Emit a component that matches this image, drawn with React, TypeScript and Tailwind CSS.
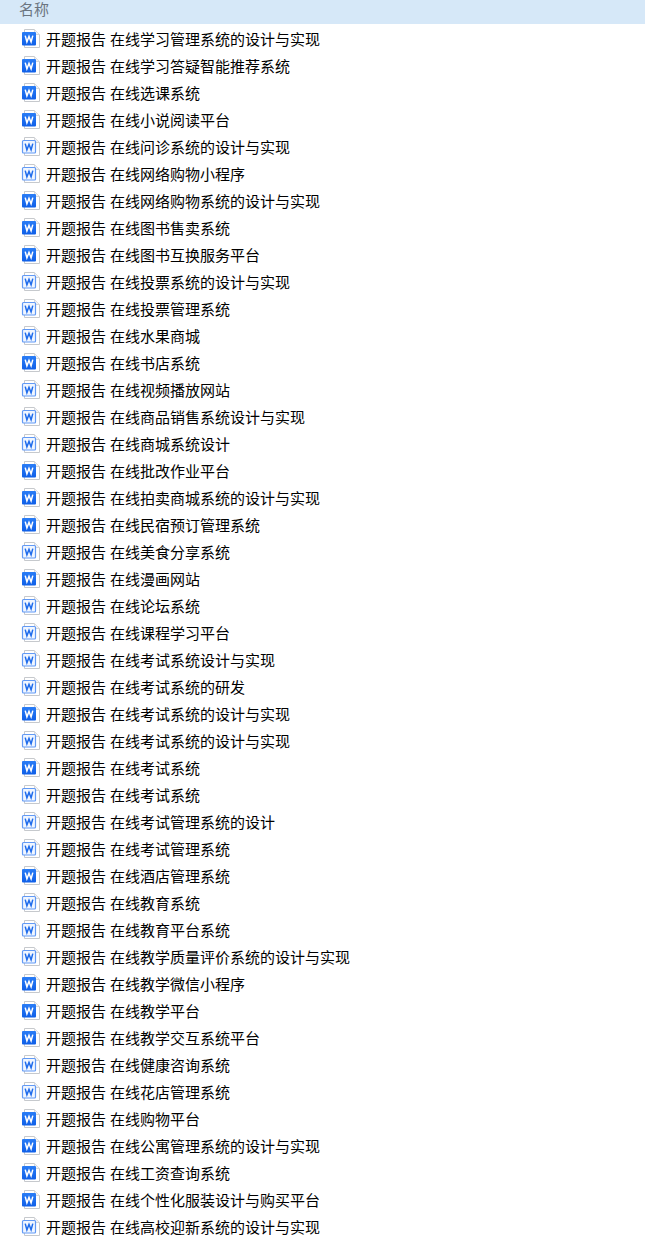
import React from "react";

type Row = { name: string; solid: boolean };

const names = [
  "在线学习管理系统的设计与实现",
  "在线学习答疑智能推荐系统",
  "在线选课系统",
  "在线小说阅读平台",
  "在线问诊系统的设计与实现",
  "在线网络购物小程序",
  "在线网络购物系统的设计与实现",
  "在线图书售卖系统",
  "在线图书互换服务平台",
  "在线投票系统的设计与实现",
  "在线投票管理系统",
  "在线水果商城",
  "在线书店系统",
  "在线视频播放网站",
  "在线商品销售系统设计与实现",
  "在线商城系统设计",
  "在线批改作业平台",
  "在线拍卖商城系统的设计与实现",
  "在线民宿预订管理系统",
  "在线美食分享系统",
  "在线漫画网站",
  "在线论坛系统",
  "在线课程学习平台",
  "在线考试系统设计与实现",
  "在线考试系统的研发",
  "在线考试系统的设计与实现",
  "在线考试系统的设计与实现",
  "在线考试系统",
  "在线考试系统",
  "在线考试管理系统的设计",
  "在线考试管理系统",
  "在线酒店管理系统",
  "在线教育系统",
  "在线教育平台系统",
  "在线教学质量评价系统的设计与实现",
  "在线教学微信小程序",
  "在线教学平台",
  "在线教学交互系统平台",
  "在线健康咨询系统",
  "在线花店管理系统",
  "在线购物平台",
  "在线公寓管理系统的设计与实现",
  "在线工资查询系统",
  "在线个性化服装设计与购买平台",
  "在线高校迎新系统的设计与实现",
];

// rows that use the filled blue icon
const solidRows = [0, 1, 2, 3, 6, 7, 8, 12, 16, 17, 18, 20, 25, 27, 31, 35, 36, 37, 40, 41, 42, 43];

const rows: Row[] = names.map((name, i) => ({ name, solid: solidRows.includes(i) }));

function WordIcon({ solid }: { solid: boolean }) {
  return (
    <svg width="20" height="20" viewBox="0 0 20 20" className="shrink-0">
      <defs>
        <linearGradient id="wordBlue" x1="0" y1="0" x2="0" y2="1">
          <stop offset="0" stopColor="#2a7df6" />
          <stop offset="1" stopColor="#0f5fe8" />
        </linearGradient>
      </defs>
      <path d="M3.5 .5H13.5L18.5 5.5V18.5H3.5Z" fill="#fff" stroke="#c6c9cd" />
      <path d="M13.5 .5V5.5H18.5" fill="#f1f2f4" stroke="#d6d8db" />
      {solid ? (
        <rect x="1" y="3" width="14" height="13.5" rx="1" fill="url(#wordBlue)" />
      ) : (
        <rect x="1.5" y="3.5" width="13" height="12.5" rx="1" fill="#f0f6ff" stroke="#629af5" strokeWidth="1.2" />
      )}
      <path
        d="M4.2 6.6L5.9 12.8L8 7.4L10.1 12.8L11.8 6.6"
        fill="none"
        stroke={solid ? "#fff" : "#1f6cec"}
        strokeWidth="1.5"
      />
    </svg>
  );
}

function App() {
  return (
    <div className="min-h-[1239px] w-[645px] overflow-hidden bg-white font-['Noto_Sans_CJK_SC','Noto_Sans',sans-serif]">
      <div className="flex h-6 items-center bg-[#d6e8f8] pb-2 pl-[19px] text-[15px] leading-none text-[#6b7480]">名称</div>
      <div className="pt-px">
        {rows.map((row, i) => (
          <div key={i} className="flex h-[27px] items-center gap-[5px] pl-[21px]">
            <WordIcon solid={row.solid} />
            <span className="whitespace-nowrap text-[15px] leading-none text-black [word-spacing:0.6px]">
              开题报告 {row.name}
            </span>
          </div>
        ))}
      </div>
    </div>
  );
}

export default App;
